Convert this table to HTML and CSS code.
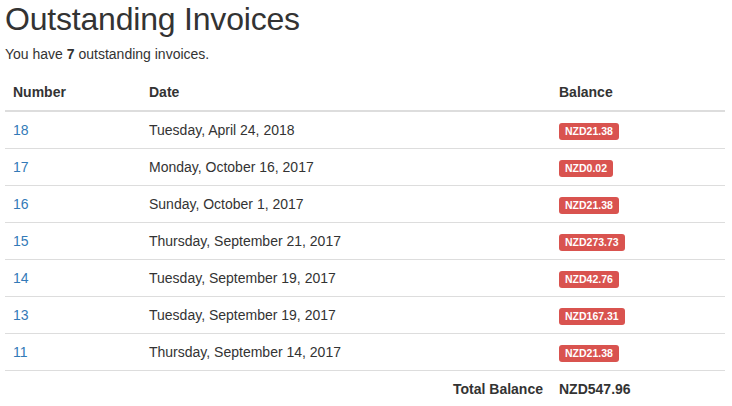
FILE: index.html
```html
<!DOCTYPE html>
<html>
<head>
<meta charset="utf-8">
<link rel="stylesheet" href="styles.css">
</head>
<body>
<div class="page">
  <h1 class="title">Outstanding Invoices</h1>
  <p class="intro">You have <strong>7</strong> outstanding invoices.</p>
  <table class="invoices">
    <colgroup>
      <col class="c-num">
      <col class="c-date">
      <col class="c-bal">
    </colgroup>
    <thead>
      <tr><th>Number</th><th>Date</th><th>Balance</th></tr>
    </thead>
    <tbody>
      <tr><td><a href="#">18</a></td><td>Tuesday, April 24, 2018</td><td><span class="label">NZD21.38</span></td></tr>
      <tr><td><a href="#">17</a></td><td>Monday, October 16, 2017</td><td><span class="label">NZD0.02</span></td></tr>
      <tr><td><a href="#">16</a></td><td>Sunday, October 1, 2017</td><td><span class="label">NZD21.38</span></td></tr>
      <tr><td><a href="#">15</a></td><td>Thursday, September 21, 2017</td><td><span class="label">NZD273.73</span></td></tr>
      <tr><td><a href="#">14</a></td><td>Tuesday, September 19, 2017</td><td><span class="label">NZD42.76</span></td></tr>
      <tr><td><a href="#">13</a></td><td>Tuesday, September 19, 2017</td><td><span class="label">NZD167.31</span></td></tr>
      <tr><td><a href="#">11</a></td><td>Thursday, September 14, 2017</td><td><span class="label">NZD21.38</span></td></tr>
    </tbody>
    <tfoot>
      <tr><td></td><td class="total-label">Total Balance</td><td class="total-value">NZD547.96</td></tr>
    </tfoot>
  </table>
</div>
</body>
</html>
```

FILE: styles.css
```css
html, body {
  margin: 0;
  padding: 0;
  background: #fff;
}
body {
  font-family: "Liberation Sans", Arial, sans-serif;
  font-size: 14px;
  line-height: 20px;
  color: #333;
}
.page {
  padding: 0 7px 0 5px;
}
.title {
  font-size: 32px;
  font-weight: 500;
  letter-spacing: -0.2px;
  line-height: 38px;
  margin: 0 0 6px 0;
  color: #333;
}
.intro {
  margin: 0 0 10px 0;
}
.intro strong {
  font-weight: bold;
}
.invoices {
  width: 720px;
  border-collapse: collapse;
  border-spacing: 0;
  table-layout: fixed;
}
.c-num { width: 136px; }
.c-date { width: 410px; }
.c-bal { width: 174px; }
.invoices th,
.invoices td {
  padding: 8px;
  text-align: left;
  vertical-align: top;
  line-height: 20px;
}
.invoices th {
  font-weight: bold;
  border-bottom: 2px solid #ddd;
}
.invoices tbody td,
.invoices tfoot td {
  border-top: 1px solid #ddd;
}
.invoices a {
  color: #337ab7;
  text-decoration: none;
}
.label {
  display: inline;
  padding: 2px 6px 3px;
  font-size: 10.5px;
  font-weight: bold;
  line-height: 1;
  color: #fff;
  background-color: #d9534f;
  border-radius: 3px;
  white-space: nowrap;
  vertical-align: baseline;
}
.total-label {
  text-align: right !important;
  font-weight: bold;
}
.total-value {
  font-weight: bold;
}
```
